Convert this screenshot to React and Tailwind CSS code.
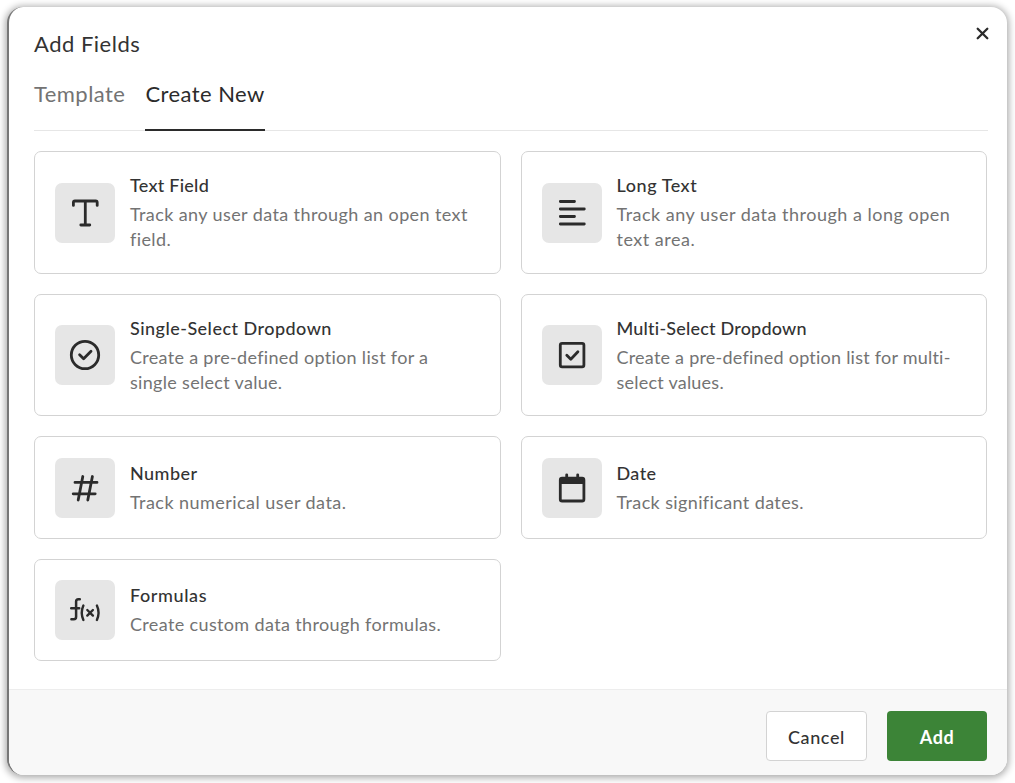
const iconProps = {
  viewBox: '0 0 60 60',
  className: 'size-full',
  fill: 'none',
  stroke: 'currentColor',
  strokeWidth: 2.8,
  strokeLinecap: 'round',
  strokeLinejoin: 'round',
}

const TextIcon = () => (
  <svg {...iconProps}>
    <path d="M18.4 22.4v-2.9q0-1.5 1.5-1.5h20.8q1.5 0 1.5 1.5v2.9M30.3 18v24M25.8 42h9" />
  </svg>
)

const LongTextIcon = () => (
  <svg {...iconProps}>
    <path d="M18.3 18.5h14.2M18.3 26h24M18.3 33.5h14.2M18.3 41h24" />
  </svg>
)

const CircleCheckIcon = () => (
  <svg {...iconProps}>
    <circle cx="30" cy="30" r="13.7" />
    <path d="m24.6 29.8 4 4 7.4-7.6" />
  </svg>
)

const SquareCheckIcon = () => (
  <svg {...iconProps}>
    <rect x="18.3" y="18.3" width="23.6" height="23.6" rx="1.8" />
    <path d="m24.8 30.2 4 4 7.1-7.4" />
  </svg>
)

const HashIcon = () => (
  <svg {...iconProps}>
    <path d="M27.8 18.5 23.2 42.1M37.4 18.5 32.8 42.1M20 24.4h22M18.2 35.8h22" />
  </svg>
)

const CalendarIcon = () => (
  <svg {...iconProps}>
    <rect x="18.3" y="20.2" width="23.6" height="22.8" rx="1.8" />
    <path d="M18.9 20.8h22.4v4.4H18.9z" fill="currentColor" strokeWidth="1.6" />
    <path d="M24.7 16.8v3.6M35.7 16.8v3.6" />
  </svg>
)

const FormulaIcon = () => (
  <svg {...iconProps}>
    <path d="M24.8 19.3h-1.4c-1.5 0-2.3.8-2.3 2.3v15.2c0 1.6-.8 2.5-2.3 2.5h-2.4M16.2 28.3h8" strokeWidth="2.5" />
    <path d="M28.4 25.6c-2.1 4.6-2.1 9.8 0 14.4M41.9 25.6c2.1 4.6 2.1 9.8 0 14.4" strokeWidth="2.4" />
    <path d="m32.3 30 5.6 5.6M37.9 30l-5.6 5.6" strokeWidth="2.4" />
  </svg>
)

const fields = [
  {
    icon: TextIcon,
    title: 'Text Field',
    titleTracking: 'tracking-[0.25px]',
    lines: ['Track any user data through an open text', 'field.'],
    tracking: 'tracking-[0.4px]',
  },
  {
    icon: LongTextIcon,
    title: 'Long Text',
    titleTracking: 'tracking-[0.55px]',
    lines: ['Track any user data through a long open', 'text area.'],
    tracking: 'tracking-[0.5px]',
  },
  {
    icon: CircleCheckIcon,
    title: 'Single-Select Dropdown',
    titleTracking: 'tracking-[0.47px]',
    lines: ['Create a pre-defined option list for a', 'single select value.'],
    tracking: 'tracking-[0.31px]',
  },
  {
    icon: SquareCheckIcon,
    title: 'Multi-Select Dropdown',
    titleTracking: 'tracking-[0.2px]',
    lines: ['Create a pre-defined option list for multi-', 'select values.'],
    tracking: 'tracking-[0.23px]',
  },
  {
    icon: HashIcon,
    title: 'Number',
    titleTracking: 'tracking-[0.45px]',
    lines: ['Track numerical user data.'],
    tracking: 'tracking-[0.45px]',
  },
  {
    icon: CalendarIcon,
    title: 'Date',
    titleTracking: 'tracking-[0.4px]',
    lines: ['Track significant dates.'],
    tracking: 'tracking-[0.38px]',
  },
  {
    icon: FormulaIcon,
    title: 'Formulas',
    titleTracking: 'tracking-[0.6px]',
    lines: ['Create custom data through formulas.'],
    tracking: 'tracking-[0.36px]',
  },
]

function FieldCard({ field }) {
  return (
    <button className="flex items-center rounded-[7px] border border-[#d3d3d3] px-5 text-left">
      <span className="mr-[15px] size-[60px] shrink-0 rounded-[7px] bg-[#e6e6e6] text-[#2b2b2b]">
        <field.icon />
      </span>
      <span className="flex flex-col whitespace-nowrap text-[18px]">
        <span className={`mb-1 font-medium leading-[25px] text-[#333] ${field.titleTracking}`}>
          {field.title}
        </span>
        {field.lines.map((line) => (
          <span key={line} className={`leading-[25px] text-[#737373] ${field.tracking}`}>
            {line}
          </span>
        ))}
      </span>
    </button>
  )
}

export default function App() {
  return (
    <div className="h-[783px] w-[1015px] overflow-hidden bg-white pl-[7px] pt-[7px] font-['Lato',sans-serif]">
      <div className="flex h-[768px] w-[1000px] flex-col overflow-hidden rounded-[16px] border-l-2 border-[#777] bg-white shadow-[0_1px_7px_2px_rgba(0,0,0,0.32)]">
        <header className="relative pl-[25px] pr-[19.5px] pt-[22px]">
          <h1 className="text-[22px] leading-[30px] tracking-[0.5px] text-[#333]">Add Fields</h1>
          <button aria-label="Close" className="absolute right-[18px] top-5 text-[#2b2b2b]">
            <svg viewBox="0 0 13 13" className="size-[13px]" stroke="currentColor" strokeWidth="2.3" strokeLinecap="round">
              <path d="m1.7 1.7 9.6 9.6M11.3 1.7l-9.6 9.6" />
            </svg>
          </button>
          <nav className="mt-[17px] flex h-[55px] gap-5 border-b border-[#e6e6e6] text-[22px] tracking-[0.45px]">
            <button className="flex h-[55px] items-start pt-[1px] text-[#737373]">Template</button>
            <button className="flex h-[55px] items-start border-b-2 border-[#2b2b2b] pt-[1px] text-[#2b2b2b]">
              Create New
            </button>
          </nav>
        </header>

        <main className="grid flex-1 grid-cols-2 grid-rows-[123px_122px_103px_102px] gap-5 pl-[25px] pr-5 pt-5">
          {fields.map((field) => (
            <FieldCard key={field.title} field={field} />
          ))}
        </main>

        <footer className="flex h-[86px] justify-end gap-5 border-t border-[#ededed] bg-[#f8f8f8] pr-5 pt-[21px] text-[18px]">
          <button className="h-[50px] w-[101px] rounded-[4px] border border-[#d3d3d3] bg-white pt-0.5 font-medium tracking-[0.6px] text-[#333]">
            Cancel
          </button>
          <button className="h-[50px] w-[100px] rounded-[4px] bg-[#3c8437] pt-0.5 font-bold tracking-[0.6px] text-white">
            Add
          </button>
        </footer>
      </div>
    </div>
  )
}
